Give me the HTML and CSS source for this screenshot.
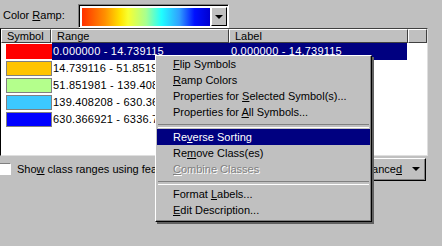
FILE: index.html
```html
<!DOCTYPE html>
<html>
<head>
    <meta charset="utf-8">
    <title>Symbology</title>
    <link rel="stylesheet" href="styles.css">
</head>
<body>
    <div class="window">

        <div class="ramp-row">
            <span class="ramp-label">Color <u>R</u>amp:</span>
            <div class="ramp">
                <div class="ramp-colors"></div>
                <div class="ramp-btn"><span class="arrow"></span></div>
            </div>
        </div>

        <div class="list">
            <div class="list-head">
                <div class="col-symbol">Symbol</div>
                <div class="col-range">Range</div>
                <div class="col-label">Label</div>
                <div class="col-rest"></div>
            </div>
            <div class="row selected">
                <div class="cell-symbol"><span class="swatch sw-red"></span></div>
                <div class="cell-range">0.000000 - 14.739115</div>
                <div class="cell-label">0.000000 - 14.739115</div>
            </div>
            <div class="row">
                <div class="cell-symbol"><span class="swatch sw-orange"></span></div>
                <div class="cell-range">14.739116 - 51.851980</div>
                <div class="cell-label">14.739116 - 51.851980</div>
            </div>
            <div class="row">
                <div class="cell-symbol"><span class="swatch sw-green"></span></div>
                <div class="cell-range">51.851981 - 139.408207</div>
                <div class="cell-label">51.851981 - 139.408207</div>
            </div>
            <div class="row">
                <div class="cell-symbol"><span class="swatch sw-sky"></span></div>
                <div class="cell-range">139.408208 - 630.366920</div>
                <div class="cell-label">139.408208 - 630.366920</div>
            </div>
            <div class="row">
                <div class="cell-symbol"><span class="swatch sw-blue"></span></div>
                <div class="cell-range">630.366921 - 6336.700195</div>
                <div class="cell-label">630.366921 - 6336.700195</div>
            </div>
        </div>

        <div class="options-row">
            <div class="check-group">
                <span class="checkbox"></span>
                <span>Sho<u>w</u> class ranges using feature values</span>
            </div>
            <div class="adv-btn"><span>Advance<u>d</u></span><span class="arrow"></span></div>
        </div>

        <div class="menu">
            <div class="item"><u>F</u>lip Symbols</div>
            <div class="item"><u>R</u>amp Colors</div>
            <div class="item">Properties for <u>S</u>elected Symbol(s)...</div>
            <div class="item">Properties for <u>A</u>ll Symbols...</div>
            <div class="sep"></div>
            <div class="item active">Re<u>v</u>erse Sorting</div>
            <div class="item">Re<u>m</u>ove Class(es)</div>
            <div class="item disabled"><u>C</u>ombine Classes</div>
            <div class="sep"></div>
            <div class="item">Format <u>L</u>abels...</div>
            <div class="item"><u>E</u>dit Description...</div>
        </div>
    </div>
</body>
</html>
```

FILE: styles.css
```css
* {
    margin: 0;
    padding: 0;
    box-sizing: border-box;
}

body {
    background: #c0c0c0;
    font-family: "Liberation Sans", Arial, sans-serif;
    font-size: 11px;
    color: #000;
}

.window {
    position: relative;
    width: 442px;
    height: 246px;
    overflow: hidden;
}

/* color ramp */
.ramp-row {
    display: flex;
    height: 28px;
    padding-left: 3px;
}

.ramp-label {
    width: 75px;
    line-height: 30px;
}

.ramp {
    display: flex;
    margin-top: 4px;
    width: 151px;
    height: 24px;
    padding: 1px;
    background: #fff;
    border: 1px solid;
    border-color: #808080 #fff #fff #808080;
    box-shadow: inset 1px 1px 0 #000;
}

.ramp-colors {
    flex: 1;
    margin: 2px 1px 0 2px;
    background: linear-gradient(to right, #ff3000, #ff9000 18%, #ffe400 30%, #f8ff30 36%, #a8ff90 50%, #20ffff 62%, #30a0ff 76%, #0010ff 88%, #0000d0);
}

.ramp-btn {
    width: 16px;
    margin-top: 1px;
    background: #c0c0c0;
    border: 1px solid;
    border-color: #fff #000 #000 #fff;
    display: flex;
    align-items: center;
    justify-content: center;
}

.arrow {
    display: inline-block;
    width: 0;
    height: 0;
    border-left: 4px solid transparent;
    border-right: 4px solid transparent;
    border-top: 4px solid #000;
}

/* list */
.list {
    width: 428px;
    height: 128px;
    background: #fff;
    border: 1px solid;
    border-color: #404040 #dfdfdf #dfdfdf #000;
}

.list-head {
    display: flex;
    height: 14px;
    background: #c0c0c0;
}

.list-head div {
    height: 14px;
    line-height: 12px;
    padding-left: 5px;
    border-top: 1px solid #fff;
    border-left: 1px solid #fff;
    border-right: 1px solid #404040;
    border-bottom: 1px solid #404040;
}

.col-symbol { width: 50px; }
.col-range { width: 178px; }
.col-label { width: 179px; }
.col-rest { width: 19px; }

.row {
    display: flex;
    height: 17px;
}

.cell-symbol {
    width: 51px;
    padding: 1px 0 0 5px;
}

.swatch {
    display: block;
    width: 46px;
    height: 15px;
    border: 1px solid #808080;
}

.sw-red { background: #ff0000; border-color: #ff0000; }
.sw-orange { background: #ffc400; }
.sw-green { background: #b4ff8c; }
.sw-sky { background: #3cc8ff; }
.sw-blue { background: #0000ff; }

.cell-range,
.cell-label {
    line-height: 17px;
    white-space: nowrap;
    overflow: hidden;
    letter-spacing: 0.2px;
}

.cell-range {
    width: 177px;
    padding-left: 1px;
}

.cell-label {
    width: 178px;
    padding-left: 2px;
}

.selected .cell-range,
.selected .cell-label {
    background: #000080;
    color: #fff;
}

/* bottom options */
.options-row {
    display: flex;
    justify-content: space-between;
    align-items: center;
    width: 426px;
    height: 25px;
    padding-top: 1px;
}

.check-group {
    display: flex;
    align-items: center;
    gap: 6px;
    margin-left: -1px;
    white-space: nowrap;
}

.checkbox {
    width: 12px;
    height: 12px;
    background: #fff;
    border: 1px solid;
    border-color: #808080 #fff #fff #808080;
}

.adv-btn {
    display: flex;
    align-items: center;
    justify-content: flex-end;
    gap: 10px;
    width: 90px;
    height: 23px;
    padding-right: 5px;
    white-space: nowrap;
    border: 1px solid;
    border-color: #fff #000 #000 #fff;
    box-shadow: inset -1px -1px 0 #808080;
}

/* context menu */
.menu {
    position: absolute;
    left: 155px;
    top: 55px;
    width: 217px;
    height: 167px;
    padding: 0 1px;
    background: #c0c0c0;
    border: 1px solid;
    border-color: #fff #000 #000 #fff;
    box-shadow: inset -1px -1px 0 #808080, 2px 2px 0 #606060;
}

.item {
    height: 16px;
    line-height: 16px;
    padding-left: 16px;
    white-space: nowrap;
}

.item.active {
    background: #000080;
    color: #fff;
}

.item.disabled {
    color: #808080;
    text-shadow: 1px 1px 0 #fff;
}

.sep {
    height: 9px;
    margin: 0 1px;
    padding-top: 4px;
}

.sep::before {
    content: "";
    display: block;
    height: 2px;
    border-top: 1px solid #808080;
    border-bottom: 1px solid #fff;
}
```
